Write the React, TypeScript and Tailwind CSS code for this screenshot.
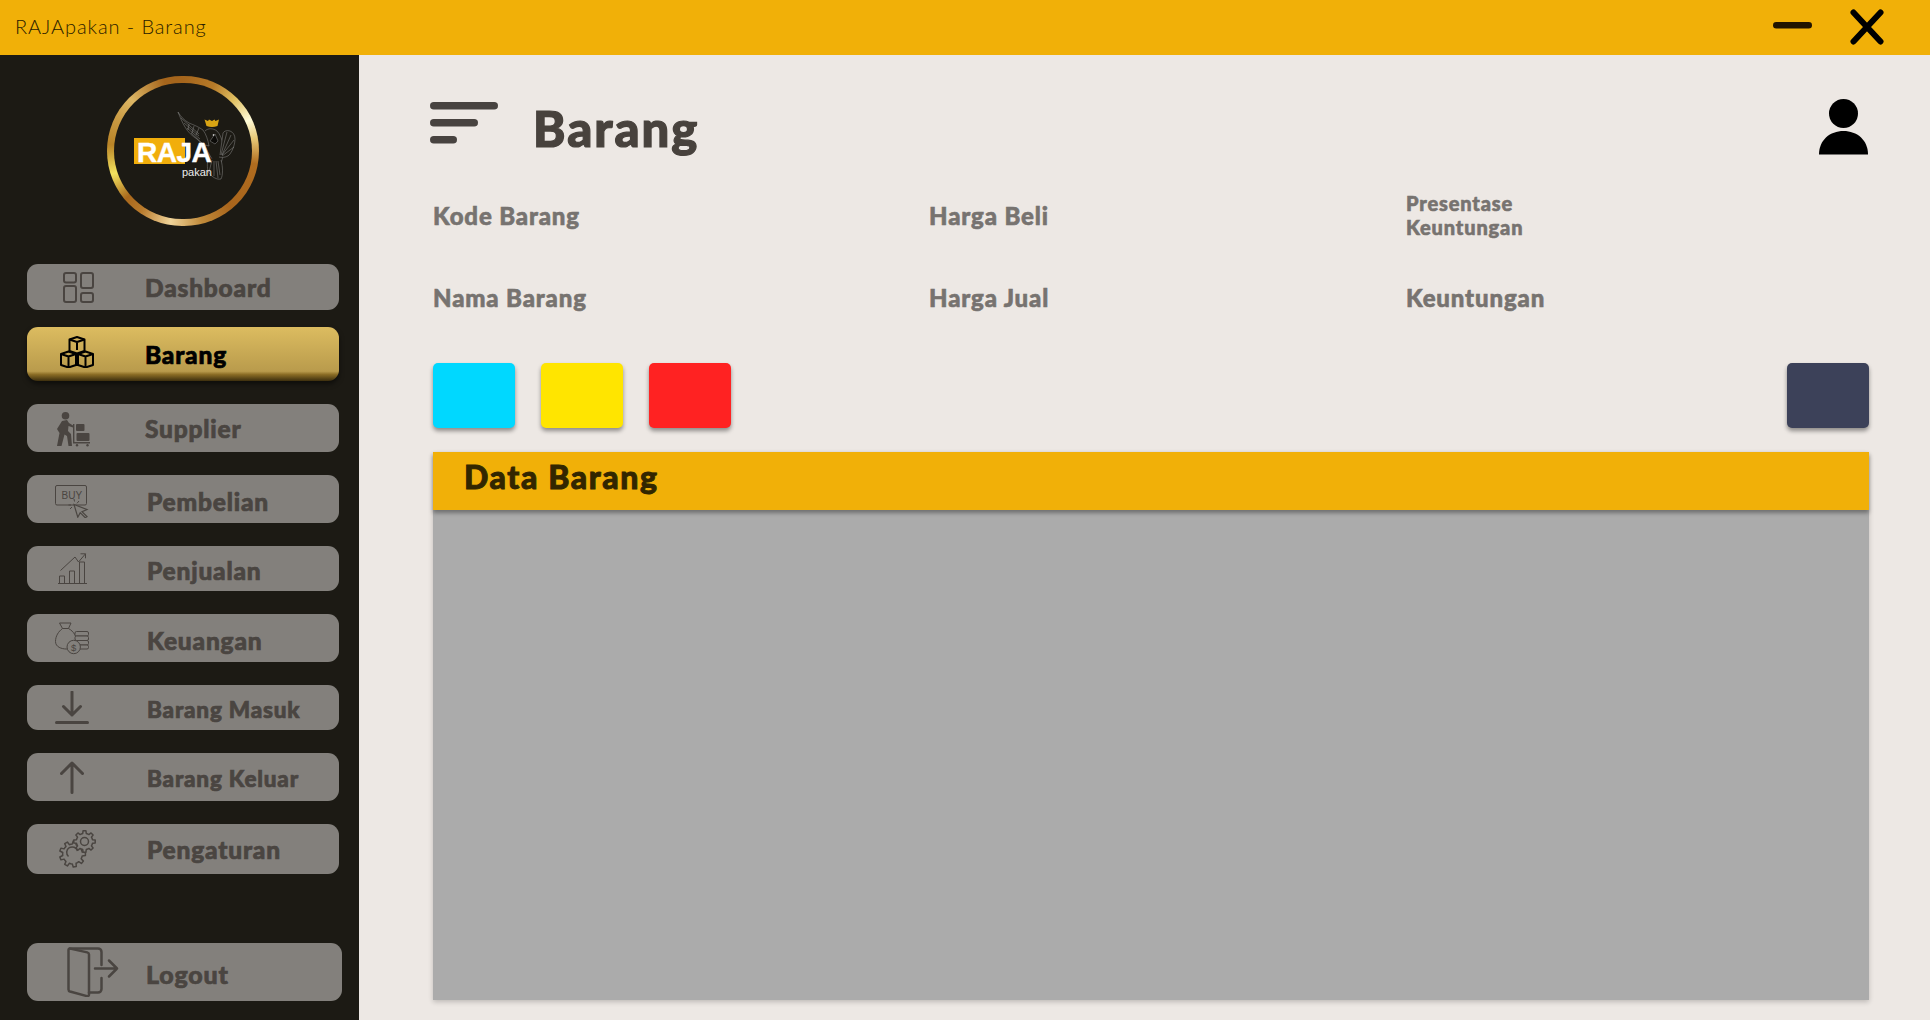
import type { ReactNode } from 'react';

const INK = '#4a4541';

function gearPath(cx: number, cy: number, r: number, teeth: number) {
  // outline of a cog, alternating outer and inner radius
  const pts: string[] = [];
  const outer = r;
  const inner = r * 0.76;
  const step = (Math.PI * 2) / teeth;
  for (let i = 0; i < teeth; i++) {
    const a = i * step;
    const seq: [number, number][] = [
      [inner, a - step * 0.5],
      [inner, a - step * 0.28],
      [outer, a - step * 0.17],
      [outer, a + step * 0.17],
      [inner, a + step * 0.28],
    ];
    seq.forEach(([rad, ang]) => {
      pts.push(`${(cx + rad * Math.cos(ang)).toFixed(2)} ${(cy + rad * Math.sin(ang)).toFixed(2)}`);
    });
  }
  return `M${pts.join('L')}Z`;
}

const DashboardIcon = () => (
  <svg width="31" height="31" viewBox="0 0 31 31" fill="none" stroke={INK} strokeWidth="2">
    <rect x="1" y="1" width="12" height="9.500" rx="2" />
    <rect x="18" y="1" width="12" height="15" rx="2" />
    <rect x="1" y="14" width="12" height="16" rx="2" />
    <rect x="18" y="21" width="12" height="9" rx="2" />
  </svg>
);

const BoxesIcon = () => (
  <svg width="34" height="32" viewBox="0 0 34 32" fill="none" stroke="#000" strokeWidth="2" strokeLinejoin="round">
    <path d="M9.500 3.500L17 1l7.500 2.500V15L17 17.500 9.500 15z" />
    <path d="M9.500 3.500L17 6l7.500-2.500M17 6v8" />
    <path d="M1 18l7.500-2.500L16 18v11l-7.500 2.500L1 29z" />
    <path d="M1 18l7.500 2.500L16 18M8.500 20.500v11" />
    <path d="M18 18l7.500-2.500L33 18v11l-7.500 2.500L18 29z" />
    <path d="M18 18l7.500 2.500L33 18M25.500 20.500v11" />
    <path d="M16 18h2M16 29h2" />
  </svg>
);

const SupplierIcon = () => (
  <svg width="33" height="35" viewBox="0 0 33 35" fill={INK}>
    <circle cx="8.500" cy="3.800" r="3.800" />
    <path d="M5 9l5-1 2 3 4 2.500v2l-4.500-1.500-.5 5 3 3 1 12H11.500l-1.500-10-2.500-1.500-3 11.500H0l2.500-13L0 17z" />
    <rect x="19" y="12" width="8.500" height="7" rx="1" />
    <rect x="19.500" y="21" width="13" height="8" rx="1" />
    <path d="M16 12h1.400v18H33v1.500H16z" />
    <circle cx="20" cy="33.200" r="1.200" />
    <circle cx="30.500" cy="33.200" r="1.200" />
  </svg>
);

const BuyIcon = () => (
  <svg width="34" height="33" viewBox="0 0 34 33" fill="none" stroke={INK} strokeWidth="1">
    <rect x="0.500" y="0.500" width="31" height="19.500" rx="1.500" />
    <text x="6.500" y="14" fontSize="10" fill={INK} stroke="none" fontFamily="'Liberation Sans', sans-serif">BUY</text>
    <path d="M19 19.500l13 5-5 2.200 5 5-1.800 1-5-5-2.400 4.500z" fill="#83807c" strokeWidth="1.200" />
    <path d="M13.500 20h2.500M15 24l2-2M19 14l.5 2.500M24 16l-2 2.300" />
  </svg>
);

const SalesIcon = () => (
  <svg width="30" height="31" viewBox="0 0 30 31" fill="none" stroke={INK} strokeWidth="1">
    <path d="M1.500 30V23h5v7M11.500 30V18h5v12M21.500 30V9h5v21M0 30.500h29" />
    <path d="M2.500 17.500L17 4l3.500 5L27.500.8M22.500.8h5v4.500" />
  </svg>
);

const MoneyIcon = () => (
  <svg width="35" height="33" viewBox="0 0 35 33" fill="none" stroke={INK} strokeWidth="1">
    <path d="M4.500 1h11.500l-2.500 5.500c5.500 3 8 8 8 13 0 5-5 7.500-10 7.500S.5 25 .5 19.500C.5 14 3.500 9.500 7.500 6.500z" />
    <path d="M7.500 6.500h6" />
    <g fill="#83807c">
      <rect x="20" y="9.500" width="13.500" height="4.500" rx="1.500" />
      <rect x="20" y="14" width="13.500" height="4.500" rx="1.500" />
      <rect x="20" y="18.500" width="13.500" height="4.500" rx="1.500" />
      <rect x="20" y="23" width="13.500" height="4" rx="1.500" />
      <circle cx="18.700" cy="25" r="6.700" />
    </g>
    <text x="16" y="28.500" fontSize="9.500" fill={INK} stroke="none" fontFamily="'Liberation Sans', sans-serif">$</text>
  </svg>
);

const InIcon = () => (
  <svg width="34" height="33" viewBox="0 0 34 33" fill="none" stroke={INK} strokeWidth="3" strokeLinecap="round">
    <path d="M17 1v23M8.500 15.500L17 24l8.500-8.500" strokeLinejoin="round" />
    <path d="M1.500 31.500h31" />
  </svg>
);

const OutIcon = () => (
  <svg width="24" height="33" viewBox="0 0 24 33" fill="none" stroke={INK} strokeWidth="3" strokeLinecap="round" strokeLinejoin="round">
    <path d="M12 31.500V2M1.500 12.500L12 2l10.500 10.500" />
  </svg>
);

const GearsIcon = () => (
  <svg width="38" height="38" viewBox="0 0 38 38" fill="none" stroke={INK} strokeWidth="1.500" strokeLinejoin="round">
    <path d={gearPath(14.500, 24, 13, 9)} />
    <path d="M10.500 26.500a5.500 5.500 0 1 1 9 -5.500" />
    <path d={gearPath(26.500, 11.500, 10.800, 8)} fill="#83807c" />
    <circle cx="26.500" cy="11.500" r="4" />
  </svg>
);

const LogoutIcon = () => (
  <svg width="52" height="50" viewBox="0 0 52 50" fill="none" stroke={INK} strokeWidth="2.500" strokeLinecap="round" strokeLinejoin="round">
    <path d="M1.500 3c0-1 .8-1.700 1.700-1.400l17 3.800c1 .3 1.800 1 1.800 2v40c0 1.200-.8 2-2 1.700L3 44.500c-1-.3-1.500-1-1.500-2z" />
    <path d="M3 1.500h28c2 0 3.500 1.500 3.500 3.500v13M34.500 31v11c0 2-1.500 3.500-3.500 3.500h-9" />
    <path d="M28 21.500h22M42 13.500l8 8-8 8" />
  </svg>
);

function Logo() {
  return (
    <div className="w-[152px] h-[150px] rounded-full flex items-center justify-center bg-[conic-gradient(#a5651c_0deg,#b67a28_25deg,#e0c062_45deg,#fffbd8_65deg,#e8c977_80deg,#b06c1f_100deg,#a9651c_140deg,#c08a3a_165deg,#f0d49a_190deg,#b87a2c_215deg,#a9681c_230deg,#f3e35f_252deg,#b98427_275deg,#c99a42_295deg,#dcb665_315deg,#a5651c_345deg,#a5651c_360deg)]">
      <div className="w-[138px] h-[136px] rounded-full bg-[#1c1a14]">
        <svg width="138" height="136" viewBox="0 0 138 136" fill="none">
          {/* wing */}
          <g stroke="#a9a9a9" strokeWidth="0.400">
            <path d="M64 29c3 5 6 8 11 11 5 2 10 4 14 7 3 4 5 10 6 16-5-1-9-3-12-7-5-3-9-7-12-12-3-5-5-10-7-15z" fill="#1c1a14" />
            <path d="M67 35l18 16M70 40l15 13M73 45l13 11M77 50l11 10M75 41l-1 6M80 43l-2 7M85 45l-3 7" />
            {/* body */}
            <path d="M91 48c3-3 8-3 12 0 3 3 5 8 6 14 1 7 0 14-3 20-1 5-3 9-5 12M90 60c2 6 5 11 8 16" />
            <path d="M101 51l3 7-3 3-5-3z" fill="#0c0b08" />
            {/* tail fan */}
            <path d="M105 74c4 1 9 0 11-3 3-4 5-10 5-15 0-4-2-7-5-8-3-1-6 0-7 2" fill="#1c1a14" />
            <path d="M106 72l3-22M107 72l6-23M108 72l9-20M108 72l12-15M108 73l12-9" />
            {/* lower fan */}
            <path d="M94 75c-1 6-1 12 1 15 3 4 8 7 12 6 2-4 2-12 0-19" fill="#1c1a14" />
            <path d="M98 77l-3 12M100 78l0 15M102 78l2 17M104 78l2 14" />
          </g>
          <circle cx="99.500" cy="52" r="0.800" fill="#fff" />
          {/* crown */}
          <path d="M91 38l-.5-1.500 3.500 1.500 1-1.500 3 1.500 2.500-1.500 1 1.500 3.500-1.500-1.500 6.500q-5.500 2-11 0z" fill="#d9a514" />
          <rect x="20" y="55" width="51" height="26" fill="#f1ae0b" />
          <text x="23" y="79" fontSize="28" fontWeight="700" fill="#fff" stroke="#fff" strokeWidth="0.400" fontFamily="'Liberation Sans', sans-serif" letterSpacing="-0.5">RAJA</text>
          <text x="68" y="93" fontSize="11" fill="#ececec" fontFamily="'Liberation Sans', sans-serif">pakan</text>
        </svg>
      </div>
    </div>
  );
}

type NavItem = { label: string; icon: ReactNode; box: string; slot: string; text: string };

const navItems: NavItem[] = [
  { label: 'Supplier', icon: <SupplierIcon />, box: 'h-[48px] mt-[23px]', slot: 'mt-[2px] pr-[10px]', text: 'text-[24.500px] mt-[2px] ml-[16px]' },
  { label: 'Pembelian', icon: <BuyIcon />, box: 'h-[48px] mt-[23px]', slot: 'mt-[4px] pr-[12px]', text: 'text-[24.500px] mt-[6px] ml-[18px]' },
  { label: 'Penjualan', icon: <SalesIcon />, box: 'h-[45px] mt-[23px]', slot: 'pr-[10px]', text: 'text-[24.500px] mt-[6px] ml-[18px]' },
  { label: 'Keuangan', icon: <MoneyIcon />, box: 'h-[48px] mt-[23px]', slot: 'pr-[12px]', text: 'text-[24.500px] mt-[7px] ml-[18px]' },
  { label: 'Barang Masuk', icon: <InIcon />, box: 'h-[45px] mt-[23px]', slot: 'pr-[12px]', text: 'text-[22.500px] mt-[5px] ml-[18px]' },
  { label: 'Barang Keluar', icon: <OutIcon />, box: 'h-[48px] mt-[23px]', slot: 'pr-[12px]', text: 'text-[22.500px] mt-[4px] ml-[18px]' },
  { label: 'Pengaturan', icon: <GearsIcon />, box: 'h-[50px] mt-[23px]', slot: 'pr-[2px]', text: 'text-[24.500px] mt-[2px] ml-[18px]' },
];

const BOLD = 'font-black tracking-[0.8px] [-webkit-text-stroke:0.7px_currentColor]';

function NavButton({ item }: { item: NavItem }) {
  return (
    <div className={`flex items-center w-[312px] rounded-[11px] bg-[#83807c] text-[#4a4541] ${item.box}`}>
      <span className={`w-[102px] flex justify-center ${item.slot}`}>{item.icon}</span>
      <span className={`${BOLD} ${item.text}`}>{item.label}</span>
    </div>
  );
}

const fields = [
  { label: 'Kode Barang', cls: 'text-[24px]' },
  { label: 'Harga Beli', cls: 'text-[24px]' },
  { label: 'Presentase Keuntungan', cls: 'text-[20px] leading-[24px] w-[150px] mt-[-3px]' },
  { label: 'Nama Barang', cls: 'text-[24px]' },
  { label: 'Harga Jual', cls: 'text-[24px]' },
  { label: 'Keuntungan', cls: 'text-[24px]' },
];

export default function App() {
  return (
    <div className="w-[1930px] h-[1020px] overflow-hidden flex flex-col bg-[#ede8e4] font-['Lato',sans-serif]">
      {/* title bar */}
      <div className="h-[55px] shrink-0 bg-[#f1b008] flex items-center pl-[15px] pr-[46px] pb-[4px]">
        <span className="text-[20px] font-light text-[#2a2000] tracking-[0.9px]">RAJApakan - Barang</span>
        <svg className="ml-auto" width="39" height="7" viewBox="0 0 39 7">
          <rect x="0" y="0" width="39" height="6.500" rx="3.250" fill="#211400" />
        </svg>
        <svg className="ml-[38px] mt-[3px]" width="34" height="36" viewBox="0 0 34 36" stroke="#000" strokeWidth="6" strokeLinecap="round">
          <path d="M3.500 3.500l27 29M30.500 3.500l-27 29" />
        </svg>
      </div>

      <div className="flex flex-1 min-h-0">
        {/* sidebar */}
        <aside className="w-[359px] shrink-0 bg-[#1c1a14] flex flex-col pl-[27px] pb-[19px]">
          <div className="w-[312px] flex justify-center pt-[21px]">
            <Logo />
          </div>

          <div className="flex items-center w-[312px] h-[46px] mt-[38px] rounded-[11px] text-[#4a4541] bg-[#83807c]">
            <span className="w-[102px] flex justify-center">
              <DashboardIcon />
            </span>
            <span className={`ml-[16px] mt-[2px] text-[24.500px] ${BOLD}`}>Dashboard</span>
          </div>

          {/* active item, with the dark bevel at its foot */}
          <div className="flex items-center w-[312px] h-[54px] mt-[17px] pb-[4px] rounded-[11px] text-black bg-[linear-gradient(to_bottom,#dcbc60_0%,#b99b4c_82%,#8a6c25_88%,#3d2f0e_100%)] shadow-[0_3px_5px_rgba(0,0,0,0.5)]">
            <span className="w-[102px] flex justify-center pr-[2px]">
              <BoxesIcon />
            </span>
            <span className={`ml-[16px] mt-[6px] text-[24.500px] ${BOLD}`}>Barang</span>
          </div>

          {navItems.map((item) => (
            <NavButton key={item.label} item={item} />
          ))}

          <div className="mt-auto flex items-center w-[315px] h-[58px] rounded-[11px] bg-[#83807c] text-[#4a4541]">
            <span className="w-[119px] flex pl-[40px]">
              <LogoutIcon />
            </span>
            <span className={`text-[25px] mt-[6px] ${BOLD}`}>Logout</span>
          </div>
        </aside>

        {/* content */}
        <main className="flex-1 min-w-0 flex flex-col pl-[74px] pr-[61px] pb-[20px]">
          <div className="h-[120px] flex items-start pt-[47px] shrink-0">
            <svg className="ml-[-3px]" width="68" height="42" viewBox="0 0 68 42" fill="#484340">
              <rect x="0" y="0" width="68" height="7.500" rx="3.750" />
              <rect x="0" y="17" width="48" height="7.500" rx="3.750" />
              <rect x="0" y="34" width="27" height="7.500" rx="3.750" />
            </svg>
            <h1 className="ml-[35px] mt-[-3px] text-[49px] leading-[58px] font-black tracking-[2px] [-webkit-text-stroke:1.2px_currentColor] text-[#48423d]">Barang</h1>
            <svg className="ml-auto mr-[1px] mt-[-3px]" width="49" height="56" viewBox="0 0 49 56" fill="#000">
              <circle cx="24.500" cy="14.500" r="14.500" />
              <path d="M0 55.500C0 41 11 32 24.500 32S49 41 49 55.500z" />
            </svg>
          </div>

          <div className="grid grid-cols-[496px_477px_1fr] grid-rows-[82px_82px] items-center text-[#777370] font-black tracking-[0.85px] [-webkit-text-stroke:0.6px_currentColor] shrink-0">
            {fields.map((f) => (
              <div key={f.label} className={f.cls}>
                {f.label}
              </div>
            ))}
          </div>

          <div className="flex gap-[26px] mt-[24px] shrink-0">
            <div className="w-[82px] h-[65px] rounded-[5px] bg-[#00d8ff] shadow-[0_3px_4px_rgba(0,0,0,0.4)]" />
            <div className="w-[82px] h-[65px] rounded-[5px] bg-[#ffe500] shadow-[0_3px_4px_rgba(0,0,0,0.4)]" />
            <div className="w-[82px] h-[65px] rounded-[5px] bg-[#ff2222] shadow-[0_3px_4px_rgba(0,0,0,0.4)]" />
            <div className="ml-auto w-[82px] h-[65px] rounded-[5px] bg-[#3c4159] shadow-[0_3px_4px_rgba(0,0,0,0.4)]" />
          </div>

          <section className="mt-[24px] flex-1 min-h-0 flex flex-col bg-[#ababab] shadow-[0_2px_5px_rgba(0,0,0,0.2)]">
            <div className="h-[58px] shrink-0 bg-[#f1b008] pl-[31px] pt-[4px] shadow-[0_3px_4px_rgba(0,0,0,0.35)]">
              <span className="text-[32px] leading-[42px] font-black tracking-[1.6px] [-webkit-text-stroke:0.9px_currentColor] text-[#322600]">Data Barang</span>
            </div>
          </section>
        </main>
      </div>
    </div>
  );
}
